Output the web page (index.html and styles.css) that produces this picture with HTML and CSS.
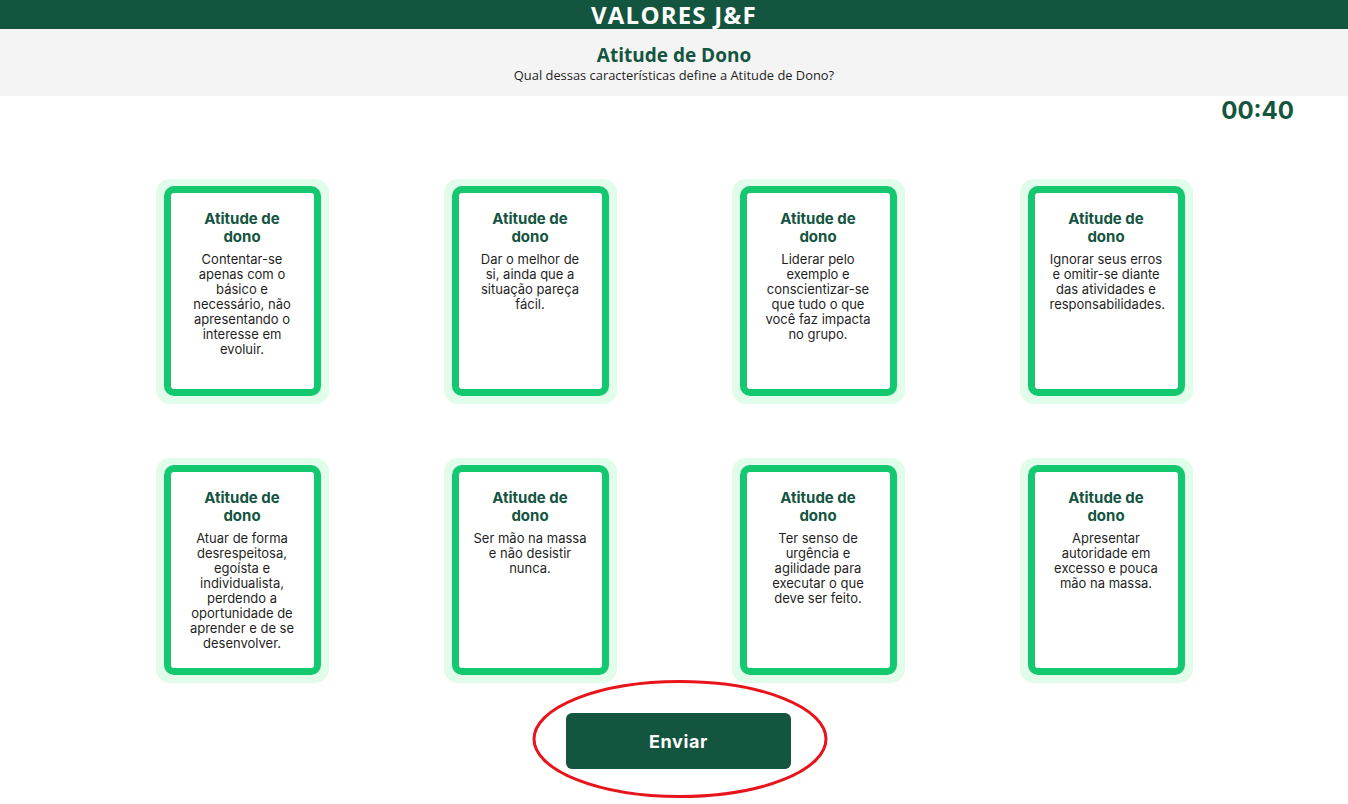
FILE: index.html
```html
<!DOCTYPE html>
<html lang="pt-BR">
<head>
<meta charset="utf-8">
<title>Valores J&amp;F</title>
<link rel="stylesheet" href="styles.css">
</head>
<body>
<header class="topbar"><span class="brand">VALORES J&amp;F</span></header>
<section class="quiz-head">
  <h1 class="quiz-title">Atitude de Dono</h1>
  <p class="quiz-sub">Qual dessas características define a Atitude de Dono?</p>
</section>
<div class="timer">00:40</div>
<main class="grid">
  <div class="card"><div class="card-inner"><h2 class="card-title">Atitude de dono</h2><p class="card-text">Contentar-se apenas com o básico e necessário, não apresentando o interesse em evoluir.</p></div></div>
  <div class="card"><div class="card-inner"><h2 class="card-title">Atitude de dono</h2><p class="card-text">Dar o melhor de si, ainda que a situação pareça fácil.</p></div></div>
  <div class="card"><div class="card-inner"><h2 class="card-title">Atitude de dono</h2><p class="card-text">Liderar pelo exemplo e conscientizar-se que tudo o que você faz impacta no grupo.</p></div></div>
  <div class="card"><div class="card-inner"><h2 class="card-title">Atitude de dono</h2><p class="card-text">Ignorar seus erros e omitir-se diante das atividades e responsabilidades.</p></div></div>
  <div class="card"><div class="card-inner"><h2 class="card-title">Atitude de dono</h2><p class="card-text">Atuar de forma desrespeitosa, egoísta e individualista, perdendo a oportunidade de aprender e de se desenvolver.</p></div></div>
  <div class="card"><div class="card-inner"><h2 class="card-title">Atitude de dono</h2><p class="card-text">Ser mão na massa e não desistir nunca.</p></div></div>
  <div class="card"><div class="card-inner"><h2 class="card-title">Atitude de dono</h2><p class="card-text">Ter senso de urgência e agilidade para executar o que deve ser feito.</p></div></div>
  <div class="card"><div class="card-inner"><h2 class="card-title">Atitude de dono</h2><p class="card-text">Apresentar autoridade em excesso e pouca mão na massa.</p></div></div>
</main>
<div class="actions">
  <button class="send-btn" type="button">Enviar</button>
</div>
<svg class="annotation" width="300" height="122" viewBox="0 0 300 122" aria-hidden="true">
  <ellipse cx="150" cy="61" rx="146" ry="57.5" fill="none" stroke="#e8141c" stroke-width="3"/>
</svg>
</body>
</html>
```
FILE: styles.css
```css
* { box-sizing: border-box; }
html, body { margin: 0; padding: 0; background: #ffffff; }
body {
  font-family: Inter, "DejaVu Sans", sans-serif;
  color: #1f1f1f;
  position: relative;
  min-height: 804px;
}
.topbar {
  height: 29px;
  background: #14553f;
  color: #ffffff;
  display: flex;
  align-items: center;
  justify-content: center;
  font-family: "Open Sans", "Noto Sans", sans-serif;
  font-weight: 700;
}
.brand {
  font-size: 24px;
  letter-spacing: 1.2px;
  line-height: 24px;
}
.quiz-head {
  height: 67px;
  background: #f4f4f4;
  text-align: center;
  padding-top: 14px;
  font-family: "Open Sans", "Noto Sans", sans-serif;
}
.quiz-title {
  margin: 0;
  font-size: 19px;
  line-height: 24px;
  font-weight: 700;
  color: #14553f;
}
.quiz-sub {
  margin: 0;
  font-size: 12.9px;
  line-height: 16px;
  color: #1f1f1f;
}
.timer {
  text-align: right;
  padding-right: 54px;
  font-size: 24px;
  line-height: 30px;
  font-weight: 700;
  color: #14553f;
}
.grid {
  width: 1152px;
  margin: 53px auto 0;
  display: grid;
  grid-template-columns: repeat(4, 288px);
  row-gap: 54px;
  justify-items: center;
}
.card {
  width: 173px;
  height: 225px;
  padding: 7px 8px 8px;
  background: #e1fcea;
  border-radius: 14px;
}
.card-inner {
  height: 210px;
  background: #ffffff;
  border: 7px solid #14c86f;
  border-radius: 10px;
  padding: 17px 15px 0;
  text-align: center;
}
.card-title {
  max-width: 100px;
  margin: 0 auto;
  font-size: 15px;
  line-height: 18px;
  font-weight: 700;
  color: #14553f;
}
.card-text {
  margin: 6px 0 0;
  font-size: 13px;
  line-height: 15px;
  color: #1f1f1f;
}
.actions {
  display: flex;
  justify-content: center;
  padding-left: 9px;
  margin-top: 30px;
}
.send-btn {
  width: 225px;
  height: 56px;
  border: none;
  border-radius: 6px;
  background: #14553f;
  color: #ffffff;
  font-family: Inter, sans-serif;
  font-weight: 700;
  font-size: 18px;
  letter-spacing: 0.6px;
}
.annotation {
  position: absolute;
  left: 530px;
  top: 678px;
}
```
